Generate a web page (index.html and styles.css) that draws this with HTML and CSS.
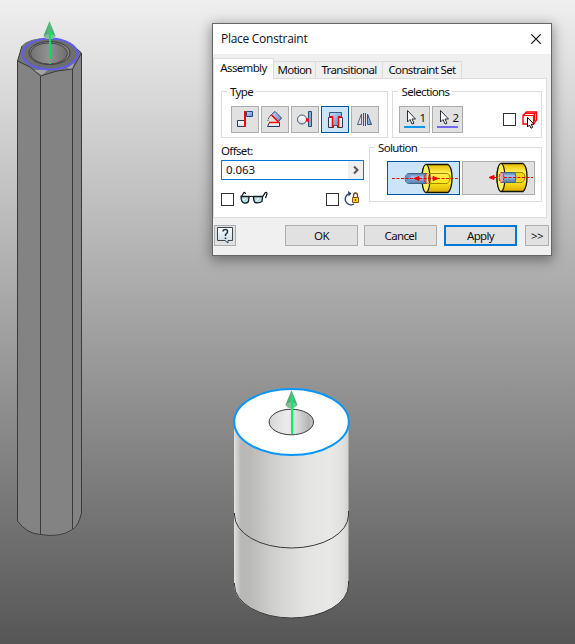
FILE: index.html
```html
<!DOCTYPE html>
<html lang="en">
<head>
<meta charset="utf-8">
<title>Place Constraint</title>
<link rel="stylesheet" href="styles.css">
</head>
<body>
<main class="viewport">
<svg class="scene" width="575" height="644" viewBox="0 0 575 644">
  <defs>
    <linearGradient id="cyl"><stop offset="0" stop-color="#e2e2e2"/><stop offset=".06" stop-color="#b8b8b6"/><stop offset=".14" stop-color="#b9b9b7"/><stop offset=".35" stop-color="#d0d0ce"/><stop offset=".6" stop-color="#e2e2e2"/><stop offset=".84" stop-color="#e9e9e7"/><stop offset=".95" stop-color="#e0e0de"/><stop offset="1" stop-color="#d2d2d0"/></linearGradient>
    <linearGradient id="bore"><stop offset="0" stop-color="#d5d5d5"/><stop offset=".4" stop-color="#ececec"/><stop offset=".65" stop-color="#d8d8d8"/><stop offset=".9" stop-color="#b4b4b4"/><stop offset="1" stop-color="#cacaca"/></linearGradient>
    <linearGradient id="hole"><stop offset="0" stop-color="#727272"/><stop offset=".5" stop-color="#929292"/><stop offset="1" stop-color="#6c6c6c"/></linearGradient>
    <linearGradient id="cone"><stop offset="0" stop-color="#479d6b"/><stop offset=".5" stop-color="#58b77e"/><stop offset="1" stop-color="#45a96c"/></linearGradient>
  </defs>
  <path d="M17.500 61L22 46Q28 38 50 38Q67 38 77 49L81.500 53V513Q79 523 75 529Q66 536 50 536Q26 535 17.500 521Z" fill="#838383"/>
  <path d="M17.500 61L22 46Q28 38 50 38Q67 38 77 49L81.500 53L73 69L57 71L41 76L30 67Z" fill="#747474"/>
  <path d="M33 70L48 70L42 75ZM67 68L74 63L72 70Z" fill="#a6a6a6"/>
  <path d="M22 46L17.500 61V521Q27 534 40.500 534.500V76L30 67L17.500 61M40.500 76L57 71L72.500 69V529.500M40.500 534.500Q60 538 72.500 529.500Q78 527 81.500 513V53L77 49M72.500 69L81.500 53" fill="none" stroke="#3b3b3b"/>
  <ellipse cx="50" cy="54" rx="27.500" ry="15.500" fill="#6e6e6e" stroke="#605cf5" stroke-width="2"/>
  <ellipse cx="49.500" cy="53" rx="20.500" ry="11.500" fill="#858585" stroke="#3b3b3b"/>
  <ellipse cx="49" cy="53.500" rx="18.500" ry="10.500" fill="url(#hole)" stroke="#494949"/>
  <path d="M49.500 21L43.500 36Q49 40 55.500 36Z" fill="url(#cone)"/>
  <path d="M43.500 36Q49 32 55.500 36L53 39H46Z" fill="#85bc99"/>
  <path d="M50 31V59M50 63V64" stroke="#00e45d" stroke-width="2"/>
  <path d="M234 422V585A57.200 33 0 0 0 348.500 585V422Z" fill="url(#cyl)"/>
  <path d="M234.500 513V515A57 33 0 0 0 348.500 515V511M234.500 583V585A57 33 0 0 0 348.500 585V581" fill="none" stroke="#393939"/>
  <ellipse cx="291.500" cy="422" rx="57.300" ry="33" fill="#fff" stroke="#0896fa" stroke-width="2"/>
  <ellipse cx="291.300" cy="422" rx="22.200" ry="12.800" fill="url(#bore)" stroke="#393939"/>
  <path d="M291.500 390L285.500 405Q291 410 297.500 405Z" fill="url(#cone)"/>
  <path d="M285.500 405Q291 399 297.500 405L294 408H288Z" fill="#85bc99"/>
  <path d="M292 397V434" stroke="#00f267" stroke-width="2"/>
</svg>

<section class="dialog">
  <header class="title-bar"><h1 class="title">Place Constraint</h1>
    <svg class="close" width="10" height="10" viewBox="0 0 10 10"><path d="M.3.300L9.700 9.700M9.700.300L.3 9.700" fill="none" stroke="#111" stroke-width="1.200"/></svg>
  </header>
  <nav class="tabs">
    <span class="tab tab-active">Assembly</span>
    <span class="tab tab-motion">Motion</span>
    <span class="tab tab-trans">Transitional</span>
    <span class="tab tab-set">Constraint Set</span>
  </nav>
  <div class="panel">
    <div class="row">
      <div class="group type"><span class="legend">Type</span>
        <div class="buttons">
          <span class="btn tool"><svg width="26" height="25" viewBox="0 0 26 25"><defs><linearGradient id="blue" x2="1" y2="1"><stop stop-color="#c9dcf5"/><stop offset="1" stop-color="#6588c2"/></linearGradient><linearGradient id="white" x2="0" y2="1"><stop stop-color="#fff"/><stop offset="1" stop-color="#d7dde5"/></linearGradient></defs><path d="M14.500 4.500H20.500V9.500H14.500Z" fill="url(#blue)" stroke="#284a83"/><path d="M5.500 13.500H12.500V19.500H5.500Z" fill="url(#white)" stroke="#283a5c"/><path d="M13 4V20" stroke="#f00" stroke-width="2"/></svg></span>
          <span class="btn tool"><svg width="26" height="25" viewBox="0 0 26 25"><path d="M13 4.500L19.500 11L16.500 14.500L9.500 7.500Z" fill="url(#blue)" stroke="#284a83"/><path d="M9.500 8L16 14.500" stroke="#f00" stroke-width="1.500"/><path d="M9 8Q6 11 6 14" fill="none" stroke="#222" stroke-dasharray="2 1"/><path d="M7.500 15.500H17.500V19.500H5.500Z" fill="url(#white)" stroke="#283a5c"/><path d="M7 15.500H18" stroke="#f00" stroke-width="1.500"/></svg></span>
          <span class="btn tool"><svg width="26" height="25" viewBox="0 0 26 25"><circle cx="10" cy="12.500" r="4.500" fill="url(#white)" stroke="#43506a"/><path d="M16.500 4.500H19.500V19.500H16.500Z" fill="#87a6da" stroke="#284a83"/><circle cx="15.500" cy="13" r="1.700" fill="#f00"/></svg></span>
          <span class="btn tool chosen"><svg width="26" height="25" viewBox="0 0 26 25"><path d="M6.500 10.500H11.500V20.500H6.500ZM15.500 10.500H20.500V20.500H15.500Z" fill="url(#white)" stroke="#283a5c"/><path d="M7.500 5.500H19.500V9.500H16.500V18.500H10.500V9.500H7.500Z" fill="url(#blue)" stroke="#365582"/><path d="M7 10H10.500V20M20 10H16.500V20" fill="none" stroke="#f00" stroke-width="1.500"/></svg></span>
          <span class="btn tool"><svg width="26" height="25" viewBox="0 0 26 25"><path d="M9.500 7V17.500H5.500Z" fill="url(#white)" stroke="#526078"/><path d="M15.500 7V17.500H19.500Z" fill="url(#blue)" stroke="#365582"/><path d="M11.500 6V19M13.500 6V19" stroke="#f00"/></svg></span>
        </div>
      </div>
      <div class="group selections"><span class="legend">Selections</span>
        <div class="buttons picks">
          <span class="btn pick"><svg width="29" height="25" viewBox="0 0 29 25"><path d="M7.500 3.500V15L10 12.500L12 17L14 16.200L12 12H15.500Z" fill="#fff" stroke="#282f3c"/><path d="M4 20H25" stroke="#0896f5" stroke-width="2"/></svg><span class="digit">1</span></span>
          <span class="btn pick"><svg width="29" height="25" viewBox="0 0 29 25"><path d="M7.500 3.500V15L10 12.500L12 17L14 16.200L12 12H15.500Z" fill="#fff" stroke="#282f3c"/><path d="M4 20H25" stroke="#7368f2" stroke-width="2"/></svg><span class="digit">2</span></span>
          <i class="check check-pick"></i>
          <svg class="cube" width="16" height="18" viewBox="0 0 16 18"><path d="M1 4.500L4.500 1H14.500V9L11.500 13H1Z" fill="#fff0ef" stroke="#f00" stroke-width="1.400"/><path d="M1 4.500H11.500V13M11.500 4.500L14.500 1M3 2.500H12.500V10" fill="none" stroke="#f00" stroke-width="1.100"/><path d="M5.500 6.500V16L7.500 14L9 17.200L10.600 16.400L9.300 13.200H12Z" fill="#fff" stroke="#111"/></svg>
        </div>
      </div>
    </div>
    <div class="row lower">
      <div class="offset">
        <label class="offset-label">Offset:</label>
        <div class="input"><span class="value">0.063</span><span class="expand"><svg width="14" height="18" viewBox="0 0 14 18"><path d="M6 5.500L9.500 9L6 12.500" fill="none" stroke="#555" stroke-width="2"/></svg></span></div>
        <div class="options">
          <i class="check"></i>
          <svg class="glasses" width="30" height="14" viewBox="0 0 30 14"><path d="M2 5.500H10L9.500 10.500Q8 12.500 5 12Q2 11 2 5.500ZM14.500 5.500H23.500L23 10.500Q20 12.500 16 11.500Q14.500 10 14.500 5.500Z" fill="#b7dbe2" stroke="#172024" stroke-width="1.300"/><path d="M4 9L7 7M17 10L20 7" stroke="#fff"/><path d="M10 6Q12 4.500 14.500 6M2.500 5.500L4.500 2Q6 .5 6.500 3M23.500 6L26 2Q28 .5 28 3L26.500 7" fill="none" stroke="#111" stroke-width="1.200"/></svg>
          <i class="check check-limit"></i>
          <svg class="limit" width="18" height="16" viewBox="0 0 18 16"><path d="M5.500 2.800A5.800 5.800 0 1 0 11 13" fill="none" stroke="#2c436e" stroke-width="1.400"/><path d="M5 0L8.500 2.500L5.500 5.500Z" fill="#203966"/><path d="M10.500 7V4.500Q10.500 2 12.500 2T14.500 4.500V7" fill="none" stroke="#77451c" stroke-width="1.300"/><path d="M9.500 6.500H15.500V11.500H9.500Z" fill="#ffd51a" stroke="#81501a"/><path d="M12.500 8V10" stroke="#63400f" stroke-width="1.200"/></svg>
        </div>
      </div>
      <div class="group solution"><span class="legend">Solution</span>
        <div class="buttons">
          <span class="btn mode chosen"><svg width="71" height="32" viewBox="0 0 71 32"><defs><linearGradient id="gold" x2="0" y2="1"><stop stop-color="#e6ba00"/><stop offset=".3" stop-color="#fff150"/><stop offset=".65" stop-color="#ffe620"/><stop offset="1" stop-color="#dbab00"/></linearGradient><linearGradient id="rod" x2="0" y2="1"><stop stop-color="#527ba9"/><stop offset=".35" stop-color="#9fc4ec"/><stop offset="1" stop-color="#4d7baa"/></linearGradient></defs><path d="M38 2.500H60Q64 5 64 16T60 30.500H38Q34 27 34 16T38 2.500Z" fill="url(#gold)" stroke="#151500" stroke-width="1.300"/><ellipse cx="38" cy="16.500" rx="4" ry="14" fill="#fff35b" stroke="#151500" stroke-width="1.200"/><path d="M40 11.500H59Q62 12 62 16T59 21.500H40" fill="none" stroke="#a88700"/><path d="M20 11.500H38V21.500H20Q17 20 17 16.500T20 11.500Z" fill="url(#rod)" stroke="#446582"/><ellipse cx="20" cy="16.500" rx="2.500" ry="5" fill="#6a95c6"/><ellipse cx="38.500" cy="16.500" rx="2.300" ry="5" fill="none" stroke="#e11" stroke-dasharray="3 1"/><path d="M4 16.500H70" stroke="#e00" stroke-dasharray="3 1.500"/><path d="M26 16.500L31 14.500V18.500ZM50 16.500L45 14.500V18.500Z" fill="#e00" stroke="#e00"/></svg></span>
          <span class="btn mode"><svg width="71" height="32" viewBox="0 0 71 32"><path d="M38 1.500H60Q64 4 64 15T60 29.500H38Q34 26 34 15T38 1.500Z" fill="url(#gold)" stroke="#151500" stroke-width="1.300"/><ellipse cx="38" cy="15.500" rx="4" ry="14" fill="#fff35b" stroke="#151500" stroke-width="1.200"/><path d="M39 10.500H59Q62 11 62 15T59 20.500H39" fill="#f5d519" stroke="#a88700"/><path d="M38 10.500H52Q54 15 52 20.500H38Z" fill="url(#rod)" stroke="#446582"/><ellipse cx="38.500" cy="15.500" rx="2.300" ry="5" fill="#dfa8b0" stroke="#e11" stroke-dasharray="3 1"/><path d="M27 15.500H35" stroke="#e00"/><path d="M41 15.500H70" stroke="#e00" stroke-dasharray="3 1.500"/><path d="M26 15.500L31 13.500V17.500Z" fill="#e00" stroke="#e00"/></svg></span>
        </div>
      </div>
    </div>
  </div>
  <footer class="footer">
    <span class="btn help"><svg width="20" height="19" viewBox="0 0 20 19"><defs><linearGradient id="bubble" x2="0" y2="1"><stop stop-color="#fff"/><stop offset="1" stop-color="#c9d9e3"/></linearGradient></defs><path d="M2.500 1.500H17.500V14.500H13V17L10 14.500H2.500Z" fill="url(#bubble)" stroke="#384752"/><path d="M8 5.500Q8 3.500 10.500 3.500T12.500 6Q12.500 7 10.500 8.500V10M10.500 11.500V13" fill="none" stroke="#233340" stroke-width="1.500"/></svg></span>
    <span class="btn action ok">OK</span>
    <span class="btn action cancel">Cancel</span>
    <span class="btn action apply">Apply</span>
    <span class="btn more">&gt;&gt;</span>
  </footer>
</section>
</main>
</body>
</html>
```
FILE: styles.css
```css
* { box-sizing: border-box; }
body { margin: 0; font: 11.5px/14px "Noto Sans", "Open Sans", sans-serif; letter-spacing: -0.65px; color: #111; }
svg { display: block; flex: none; }
.viewport { position: relative; width: 575px; height: 644px; overflow: hidden; background: linear-gradient(#efefef, #565656); }
.scene { display: block; }
.dialog { position: absolute; left: 212px; top: 23px; width: 340px; height: 233px; border: 1px solid #666; background: #f0f0f0; box-shadow: 0 3px 12px 1px rgba(0,0,0,.4); }
.title-bar { height: 30px; background: #fff; display: flex; align-items: center; justify-content: space-between; padding: 0 10px 0 8px; }
.title { font: 12px/16px "Open Sans", sans-serif; letter-spacing: -0.28px; margin: 0; }
.close { margin-top: -1px; }
.tabs { display: flex; align-items: flex-end; height: 25px; padding-top: 4px; }
.tab { height: 18px; border: 1px solid #dcdcdc; border-left: 0; display: flex; align-items: center; justify-content: center; white-space: nowrap; }
.tab-active { width: 61px; height: 21px; background: #fff; border-left: 1px solid #dcdcdc; border-bottom: 0; padding-bottom: 3px; }
.tab-motion { width: 42px; letter-spacing: -0.8px; }
.tab-trans { width: 67px; }
.tab-set { width: 79px; }
.tabs::after { content: ""; flex: none; width: 85px; border-bottom: 1px solid #dcdcdc; }
.panel { width: 334px; height: 139px; background: #fff; border: 1px solid #dcdcdc; border-top: 0; padding: 12px 4px 0 7px; }
.row { display: flex; gap: 4px; }
.group { border: 1px solid #dcdcdc; height: 47px; }
.legend { display: block; width: max-content; height: 14px; background: #fff; padding: 0 3px; margin: -7px 0 0 5px; }
.type { width: 168px; }
.selections { width: 150px; }
.buttons { display: flex; gap: 2px; padding: 7px 0 0 9px; }
.btn { display: flex; flex: none; align-items: center; justify-content: center; background: #e1e1e1; border: 1px solid #adadad; }
.tool { width: 28px; height: 27px; }
.chosen { background: #cce4f7; border-color: #00549a; }
.picks { padding-left: 6px; align-items: center; }
.pick { width: 31px; height: 27px; display: grid; }
.pick > * { grid-area: 1 / 1; }
.digit { align-self: center; justify-self: end; padding: 0 4px 3px 0; }
.check { display: block; width: 13px; height: 13px; border: 1px solid #333; background: #fff; flex: none; }
.check-pick { margin-left: 38px; }
.cube { margin-left: 4px; }
.lower { margin-top: 5px; gap: 5px; }
.offset { width: 143px; }
.offset-label { display: block; height: 16px; margin-top: 1px; }
.input { width: 143px; height: 20px; border: 1px solid #0078d7; display: flex; align-items: center; justify-content: space-between; padding-left: 4px; }
.value { letter-spacing: -.1px; }
.expand { background: #f0f0f0; width: 15px; height: 18px; }
.options { height: 16px; display: flex; align-items: center; margin-top: 11px; }
.glasses { margin-left: 5px; margin-top: -2px; }
.check-limit { margin-left: 57px; }
.limit { margin-left: 4px; }
.solution { width: 173px; height: 55px; margin-top: 4px; }
.solution .buttons { padding: 6px 0 0 17px; }
.mode { width: 73px; height: 34px; }
.footer { display: flex; padding: 7px 2px 0 1px; }
.help { width: 22px; height: 21px; }
.action { width: 73px; height: 21px; }
.ok { margin-left: 49px; }
.cancel { margin-left: 6px; }
.apply { margin-left: 7px; border: 2px solid #0078d7; }
.more { width: 24px; height: 21px; margin-left: 8px; }
```
